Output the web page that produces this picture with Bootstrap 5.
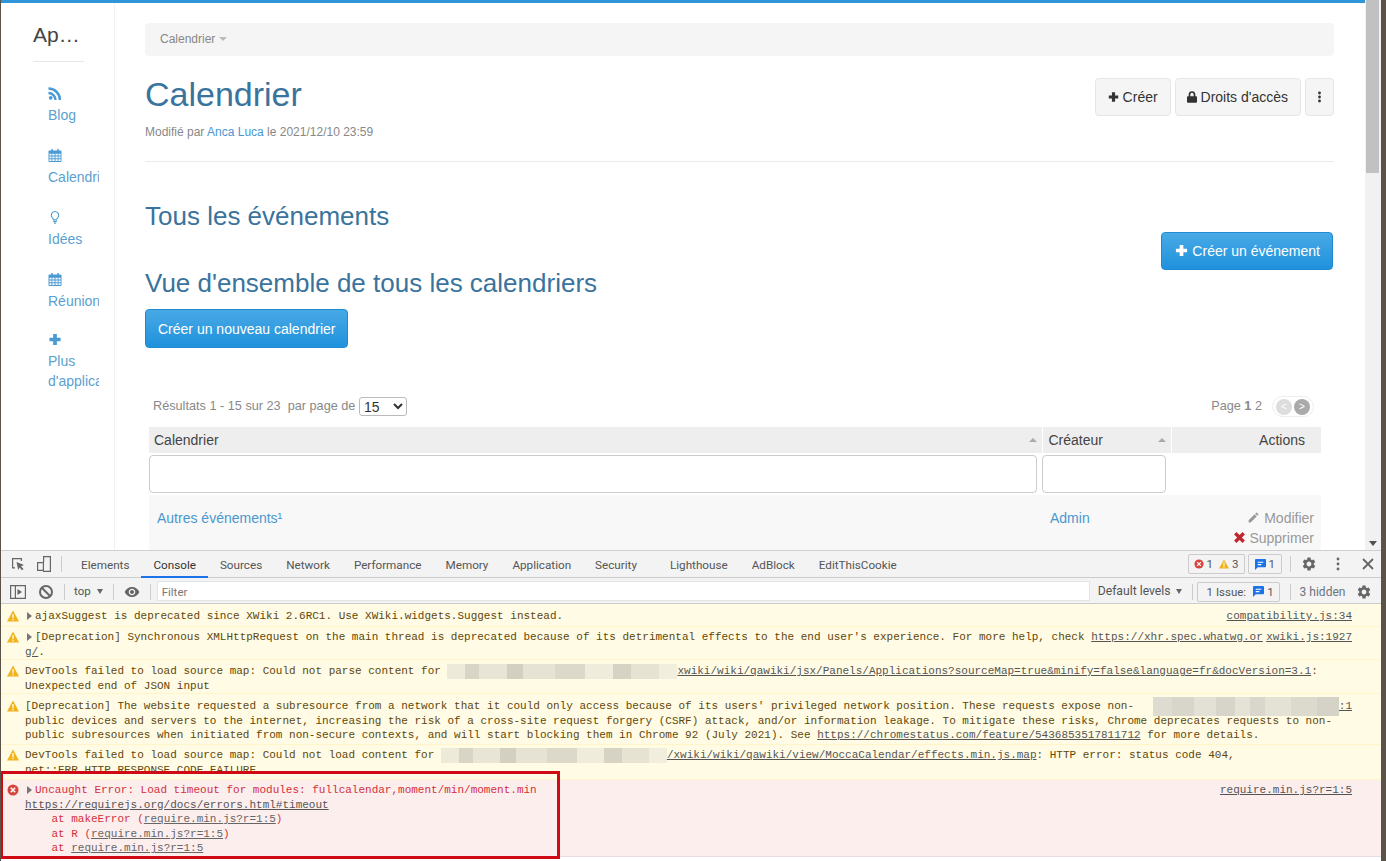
<!DOCTYPE html>
<html lang="fr">
<head>
<meta charset="utf-8">
<title>Calendrier</title>
<link href="https://cdn.jsdelivr.net/npm/bootstrap@5.3.0/dist/css/bootstrap.min.css" rel="stylesheet">
<style>
html,body{height:861px;overflow:hidden;margin:0}
body{font-family:"Liberation Sans",Arial,sans-serif;font-size:14px;background:#5b5248;color:#333}
.shell{height:861px;width:1380px;margin-left:1px;background:#fff;position:relative;overflow:hidden}
.page-pane{height:550px;overflow:hidden}
.page-main{width:1364px;border-top:3px solid #2f95d9;overflow:hidden}
.apps{width:114px;flex:none;border-right:1px solid #f1f1f1;padding:0 0 0 32px}
.apps-title{font-size:21px;color:#444;line-height:24px;margin-top:20px;padding-bottom:14px;border-bottom:1px solid #e6e6e6;width:51px;margin-bottom:22px}
.app-link{display:block;width:51px;margin-left:15px;height:62px;overflow:hidden;color:#5c9fd0;white-space:nowrap;line-height:20px;text-decoration:none}
.app-link:last-child{margin-top:-2px;height:70px}
.app-link svg{display:block;height:13px;width:14px;margin:3px 0 5px;fill:#4a9ad4}
.app-link span{display:block}
.content{width:1189px;margin-left:30px;flex:none}
.crumb{height:33px;margin-top:20px;background:#f5f5f5;border-radius:4px;padding-left:15px;font-size:12px;color:#888;line-height:33px}
.crumb i{display:inline-block;border:4px solid transparent;border-top-color:#bbb;border-bottom:0;vertical-align:2px}
.doc-title{font-size:34px;line-height:40px;color:#3a739c;margin:18px 0 0;font-weight:400}
.doc-meta{font-size:12px;line-height:17px;color:#888;margin-top:10px}
.doc-meta a,.cell-link{color:#4a97cf;text-decoration:none}
.btn-soft{background:#f5f5f5;border:1px solid #e6e6e6;color:#333;font-size:14px;height:38px;line-height:20px;padding:8px 12px;border-radius:4px}
.btn-soft svg{width:11px;height:12px;fill:#333;vertical-align:-1px}
.btn-soft.btn-dots{padding:8px 0;width:29px}
.btn-lock svg{width:10px}
.btn-lock{padding:8px 12px 8px 11px}
.btn-sky{background:linear-gradient(#48a9e6,#1f92dc);border:1px solid #2089cf;color:#fff;font-size:14px;border-radius:4px;padding:8px 12px;line-height:20px}
.btn-sky svg{width:13px;height:13px;fill:#fff;vertical-align:-1px}
.btn-event{padding-left:13px}
.head-tools{margin-top:22px;height:38px}
.divider{border-top:1px solid #eaeaea;margin-top:20px}
.sect{font-size:26px;font-weight:400;line-height:26px;color:#3a739c;margin:0}
.sect-1{margin-top:41px}
.row-create{margin:3px 1px 0 0;height:38px}
.btn-cal{margin-top:13px;height:39px}
.results{margin-top:49px;padding:0 20px 0 8px;height:19px;font-size:12.7px;color:#888;line-height:19px}
.results select{width:48px;height:19px;font-size:14px;line-height:17px;padding:0;border:1px solid #bbb;border-radius:3px;color:#333;background:#fff;font-family:inherit;vertical-align:top}
.pager-dots{border:1px solid #eee;border-radius:11px;height:21px;width:42px;margin-left:10px;margin-top:-1px;gap:1px;padding-left:2px}
.pager-dot{width:16px;height:16px;border-radius:50%;color:#fff;font-size:10px;line-height:16px;text-align:center;margin-left:1px}
.pg-off{background:#ddd}.pg-on{background:#aaa}
.grid-wrap{margin:11px 0 0 4px;width:1172px}
.grid-tbl{width:1172px;table-layout:fixed}
.col-a{width:893px}.col-b{width:129px}.col-c{width:150px}
.grid-tbl th{background:#eee;font-weight:400;height:26px;padding:0 5px 0 6px;border-left:1px solid #fff;color:#444;position:relative}
.grid-tbl th:first-child{border-left:0;padding-left:5px}
.grid-tbl th.th-act{padding-right:16px}
.grid-tbl th i{position:absolute;right:5px;top:11px;border:4px solid transparent;border-bottom-color:#aaa;border-top:0}
.filter-cell{height:42px;padding:0 5px 0 0;vertical-align:middle}
.filter-box{display:block;height:38px;border:1px solid #ccc;border-radius:4px;background:#fff}
.grid-tbl td.body-cell{background:#f8f8f8;vertical-align:top;padding:13px 7px 0 8px;line-height:20px;height:70px}
.act{color:#999;text-align:right}
.act svg{width:13px;height:13px;vertical-align:-1px}
.devtools{height:311px;border-top:1px solid #cfcfcf;font-family:Roboto,"Noto Sans",sans-serif;font-size:11.5px;color:#555}
.tb1{height:27px;background:#f3f3f3;border-bottom:1px solid #ccc}
.tb2{height:26px;background:#f3f3f3;border-bottom:1px solid #ccc;padding-top:2px}
.dt-ico{fill:#666;flex:none}
.dt-sep{width:1px;height:16px;background:#ccc;flex:none}
.dt-tab{padding:0 12px;height:27px;line-height:28px;color:#555;font-size:11.7px}
.dt-tab-on{color:#333;border-bottom:2px solid #1a73e8}
.tab-gap{margin-left:9px}
.filter-input{width:933px;height:20px;background:#fff;border:1px solid #e4e4e4;color:#777;line-height:20px;padding-left:4px;margin:-2px 0 0 6px}
.count-box{border:1px solid #ccc;border-radius:2px;height:20px;line-height:18px;padding:0 5px;background:#f3f3f3;gap:3px}
.count-b{padding:0 6px}
.warn-gap{margin-left:3px}
.levels{font-size:12.2px;margin-left:8px}
.tri{border:3px solid transparent;border-top:5px solid #666;border-bottom:0;display:inline-block}
.log{font-family:"Liberation Mono","DejaVu Sans Mono",monospace;font-size:11px;line-height:14.6px;position:relative}
.msg{display:flex;position:relative;overflow:hidden}
.msg-ic{width:24px;flex:none;padding:0 0 0 6px}
.msg-ic svg{width:12px;height:12px;display:block;margin-top:1px}
.msg-body{flex:none;width:1327px;white-space:pre}
.msg-warn{background:#fffbe5;border-bottom:1px solid #fff5c9;color:#5f4708}
.msg-err{background:#fdeeee;border-bottom:1px solid #e8dcdc;color:#d3303a}
.msg a{color:#555;text-decoration:underline}
.msg-err .stack a{color:#666}
.h-23{height:23px;padding-top:5px}
.h-33{height:33px;padding-top:3px}
.h-34{height:34px;padding-top:4px}
.h-51{height:51px;padding-top:5px}
.h-35{height:35px;padding-top:3px}
.h-77{height:77px;padding-top:3px}
.expand{display:inline-block;width:10px;height:9px;vertical-align:-1px}
.expand::before{content:"";display:block;margin:1px 0 0 2px;border:4px solid transparent;border-left:5px solid #777;border-right:0}
.mosaic{display:inline-block;height:15px;vertical-align:top;background:linear-gradient(90deg,#eeeada 0 8%,#d8d5c6 8% 14%,#e8e5d6 14% 26%,#d3d0c2 26% 33%,#e6e3d4 33% 47%,#dcd9ca 47% 60%,#efecdc 60% 72%,#d6d3c4 72% 80%,#e6e3d3 80% 92%,#f1eedd 92%)}
.w-234{width:230px}.w-231{width:226px}
.mosaic-over{position:absolute;left:1152px;top:3px;width:186px;height:19px;background:linear-gradient(90deg,#dedcd0 0 10%,#d8d6ca 10% 22%,#e3e1d5 22% 34%,#d7d5c9 34% 44%,#e5e3d6 44% 52%,#d9d7cb 52% 60%,#e4e2d5 60% 74%,#dcdacd 74% 88%,#d5d3c8 88%)}
.prompt-row{height:5px;background:#fff}
.mark-box{position:absolute;left:-1px;top:771px;width:560px;height:88px;border:3px solid #d00a14;pointer-events:none}
.sb{width:16px;flex:none;background:#f1f1f1;position:relative}
.sb-thumb{width:13px;height:173px;background:#c1c1c1;margin-left:1px}
.sb-down{position:absolute;left:4px;bottom:4px;border:4px solid transparent;border-top:5px solid #505050;border-bottom:0}
.ins-ico{margin:0 10px 0 9px}
.dev-ico{margin-right:9px}
.sep-1{margin-right:7px}
.gear-1{margin-left:10px}
.dots-1{margin-left:19px}
.x-1{margin:0 7px 0 22px}
.cnt-1{margin-left:3px}
.tog-ico{margin:0 9px 0 9px}
.sep-2{margin:0 9px 0 11px}
.tri-top{margin-left:6px}
.sep-3{margin-left:10px}
.eye-1{margin-left:10px}
.tri-lv{margin-left:5px}
.hid-1{margin-left:9px;font-size:12px}
.gear-2{margin-left:11px}
</style>
</head>
<body>
<svg width="0" height="0" class="position-absolute">
<symbol id="i-rss" viewBox="0 0 14 14"><circle cx="2.4" cy="11.6" r="2"/><path d="M0 5.2v2.6a6.2 6.2 0 0 1 6.2 6.2h2.6A8.8 8.8 0 0 0 0 5.2z"/><path d="M0 .4V3a11 11 0 0 1 11 11h2.7A13.6 13.6 0 0 0 0 .4z"/></symbol>
<symbol id="i-cal" viewBox="0 0 14 14"><path fill-rule="evenodd" d="M3 0h1.6v1.6h4.8V0H11v1.600h2a1 1 0 0 1 1 1V13a1 1 0 0 1-1 1H1a1 1 0 0 1-1-1V2.600a1 1 0 0 1 1-1h2zM1 5v2h2.200V5zm3.100 0v2h2.400V5zm3.400 0v2h2.400V5zm3.300 0v2H13V5zM1 8v2h2.200V8zm3.100 0v2h2.400V8zm3.400 0v2h2.400V8zm3.300 0v2H13V8zM1 11v2h2.200v-2zm3.100 0v2h2.400v-2zm3.400 0v2h2.400v-2zm3.300 0v2H13v-2z"/></symbol>
<symbol id="i-bulb" viewBox="0 0 14 14"><path fill-rule="evenodd" d="M7 0a4.600 4.600 0 0 1 3.300 7.800C9.400 8.800 9.200 9.300 9.100 10H4.900C4.800 9.300 4.600 8.800 3.700 7.800A4.600 4.600 0 0 1 7 0zm0 1.100a3.500 3.500 0 0 0-2.500 5.900c.8.900 1.100 1.500 1.300 2h2.400c.2-.5.500-1.100 1.300-2A3.500 3.500 0 0 0 7 1.100z"/><path d="M5 10.600h4v1.200H5zM5.500 12.300h3l-.7 1.400H6.200z"/></symbol>
<symbol id="i-plus" viewBox="0 0 14 14"><path d="M5 1h4v4h4v4H9v4H5V9H1V5h4z"/></symbol>
<symbol id="i-lock" viewBox="0 0 12 14"><path fill-rule="evenodd" d="M6 0a4 4 0 0 1 4 4v2h1a1 1 0 0 1 1 1v6a1 1 0 0 1-1 1H1a1 1 0 0 1-1-1V7a1 1 0 0 1 1-1h1V4a4 4 0 0 1 4-4zm0 2a2 2 0 0 0-2 2v2h4V4a2 2 0 0 0-2-2z"/></symbol>
<symbol id="i-gear" viewBox="0 0 24 24"><path d="M19.14 12.94c.04-.3.06-.61.06-.94 0-.32-.02-.64-.07-.94l2.03-1.58c.18-.14.23-.41.12-.61l-1.92-3.32c-.12-.22-.37-.29-.59-.22l-2.39.96c-.5-.38-1.03-.7-1.62-.94l-.36-2.54c-.04-.24-.24-.41-.48-.41h-3.84c-.24 0-.43.17-.47.41l-.36 2.54c-.59.24-1.13.57-1.62.94l-2.39-.96c-.22-.08-.47 0-.59.22L2.74 8.870c-.12.21-.08.47.12.61l2.03 1.58c-.05.3-.09.63-.09.94s.02.64.07.94l-2.03 1.58c-.18.14-.23.41-.12.61l1.92 3.32c.12.22.37.29.59.22l2.39-.96c.5.38 1.03.7 1.62.94l.36 2.54c.05.24.24.41.48.41h3.84c.24 0 .44-.17.47-.41l.36-2.54c.59-.24 1.13-.56 1.62-.94l2.39.96c.22.08.47 0 .59-.22l1.92-3.32c.12-.22.07-.47-.12-.61l-2.01-1.58zM12 15.600c-1.980 0-3.600-1.620-3.600-3.600s1.620-3.600 3.600-3.600 3.600 1.620 3.600 3.600-1.620 3.600-3.600 3.600z"/></symbol>
<symbol id="i-warn" viewBox="0 0 12 12"><path fill="#f2b21a" d="M6 .5l6 11H0z"/><path fill="#fff8dc" d="M5.300 4h1.400v4H5.300zM5.300 8.800h1.400v1.400H5.300z"/></symbol>
<symbol id="i-err" viewBox="0 0 12 12"><circle cx="6" cy="6" r="5.500" fill="#d6453d"/><path stroke="#fff" stroke-width="1.500" d="M3.800 3.800l4.400 4.400M8.200 3.800l-4.400 4.400"/></symbol>
<symbol id="i-msg" viewBox="0 0 12 12"><path fill="#1a73e8" d="M1 0h10a1 1 0 0 1 1 1v7a1 1 0 0 1-1 1H3l-3 3V1a1 1 0 0 1 1-1z"/><path fill="#fff" d="M3 3h6v1.200H3zM3 5.500h4v1.200H3z"/></symbol>
</svg>

<div class="shell">
  <div class="page-pane d-flex">
    <div class="page-main d-flex">
      <nav class="apps">
        <div class="apps-title">Ap…</div>
        <a class="app-link" href="#"><svg><use href="#i-rss"/></svg><span>Blog</span></a>
        <a class="app-link" href="#"><svg><use href="#i-cal"/></svg><span>Calendrier</span></a>
        <a class="app-link" href="#"><svg><use href="#i-bulb"/></svg><span>Idées</span></a>
        <a class="app-link" href="#"><svg><use href="#i-cal"/></svg><span>Réunions</span></a>
        <a class="app-link" href="#"><svg><use href="#i-plus"/></svg><span>Plus</span><span>d'applications</span></a>
      </nav>
      <main class="content">
        <div class="crumb">Calendrier <i></i></div>
        <div class="d-flex justify-content-between">
          <div>
            <h1 class="doc-title">Calendrier</h1>
            <div class="doc-meta">Modifié par <a href="#">Anca Luca</a> le 2021/12/10 23:59</div>
          </div>
          <div class="d-flex head-tools gap-1">
            <button class="btn btn-soft"><svg><use href="#i-plus"/></svg> Créer</button>
            <button class="btn btn-soft btn-lock"><svg><use href="#i-lock"/></svg> Droits d'accès</button>
            <button class="btn btn-soft btn-dots"><svg viewBox="0 0 4 12"><circle cx="2" cy="2" r="1.400"/><circle cx="2" cy="6" r="1.400"/><circle cx="2" cy="10" r="1.400"/></svg></button>
          </div>
        </div>
        <div class="divider"></div>
        <h2 class="sect sect-1">Tous les événements</h2>
        <div class="d-flex justify-content-end row-create">
          <button class="btn btn-sky btn-event"><svg><use href="#i-plus"/></svg> Créer un événement</button>
        </div>
        <h2 class="sect">Vue d'ensemble de tous les calendriers</h2>
        <button class="btn btn-sky btn-cal">Créer un nouveau calendrier</button>
        <div class="d-flex justify-content-between results">
          <div>Résultats 1 - 15 sur 23 &nbsp;par page de <select aria-label="par page"><option>15</option></select></div>
          <div class="d-flex">Page&nbsp;<b>1</b>&nbsp;2
            <div class="d-flex align-items-center pager-dots"><span class="pager-dot pg-off">&lt;</span><span class="pager-dot pg-on">&gt;</span></div>
          </div>
        </div>
        <div class="grid-wrap">
          <table class="grid-tbl">
            <colgroup><col class="col-a"><col class="col-b"><col class="col-c"></colgroup>
            <tr><th>Calendrier<i></i></th><th>Créateur<i></i></th><th class="text-end th-act">Actions</th></tr>
            <tr><td class="filter-cell"><span class="filter-box"></span></td><td class="filter-cell"><span class="filter-box"></span></td><td></td></tr>
            <tr>
              <td class="body-cell"><a class="cell-link" href="#">Autres événements¹</a></td>
              <td class="body-cell"><a class="cell-link" href="#">Admin</a></td>
              <td class="body-cell act">
                <div><svg viewBox="0 0 24 24" fill="#999"><path d="M3 17.250V21h3.750L17.810 9.940l-3.750-3.750L3 17.250zM20.710 7.040a1 1 0 0 0 0-1.410l-2.340-2.340a1 1 0 0 0-1.410 0l-1.830 1.830 3.750 3.750 1.830-1.830z"/></svg> Modifier</div>
                <div><svg viewBox="0 0 12 12" fill="#c0282d"><path d="M3.200 1L6 3.800 8.800 1 11 3.200 8.200 6 11 8.800 8.800 11 6 8.200 3.200 11 1 8.800 3.800 6 1 3.200z"/></svg> Supprimer</div>
              </td>
            </tr>
          </table>
        </div>
      </main>
    </div>
    <div class="sb"><div class="sb-thumb"></div><div class="sb-down"></div></div>
  </div>

  <section class="devtools">
    <div class="tb1 d-flex align-items-center">
      <svg class="dt-ico ins-ico" width="16" height="16" viewBox="0 0 16 16"><path d="M2 2h10v3h-1.200V3.200H3.200v8H5v1.200H2z"/><path d="M6.500 6l7.500 3-3 1.200L13.500 13 12 14.300 9.700 11.500 8.200 14z"/></svg>
      <svg class="dt-ico dev-ico" width="16" height="17" viewBox="0 0 16 17"><path fill-rule="evenodd" d="M7 0h8v16H7V15H1V6h6zM8.200 1.200V6H8v8.800h5.800V1.200zM2.200 7.200v6.600h4.600V7.200z"/></svg>
      <div class="dt-sep sep-1"></div>
      <div class="d-flex">
        <div class="dt-tab">Elements</div><div class="dt-tab dt-tab-on">Console</div><div class="dt-tab">Sources</div><div class="dt-tab">Network</div><div class="dt-tab">Performance</div><div class="dt-tab">Memory</div><div class="dt-tab">Application</div><div class="dt-tab">Security</div><div class="dt-tab tab-gap">Lighthouse</div><div class="dt-tab">AdBlock</div><div class="dt-tab">EditThisCookie</div>
      </div>
      <div class="d-flex align-items-center ms-auto">
        <div class="count-box d-flex align-items-center"><svg width="10" height="10"><use href="#i-err"/></svg>1 <svg width="10" height="10" class="warn-gap"><use href="#i-warn"/></svg>3</div>
        <div class="count-box count-b d-flex align-items-center cnt-1"><svg width="11" height="11"><use href="#i-msg"/></svg>1</div>
        <div class="dt-sep ms-2"></div>
        <svg class="dt-ico gear-1" width="16" height="16"><use href="#i-gear"/></svg>
        <svg class="dt-ico dots-1" width="4" height="14" viewBox="0 0 4 14"><circle cx="2" cy="2" r="1.400"/><circle cx="2" cy="7" r="1.400"/><circle cx="2" cy="12" r="1.400"/></svg>
        <svg class="dt-ico x-1" width="12" height="12" viewBox="0 0 12 12"><path stroke="#666" stroke-width="1.800" d="M1 1l10 10M11 1L1 11"/></svg>
      </div>
    </div>
    <div class="tb2 d-flex align-items-center">
      <svg class="dt-ico tog-ico" width="16" height="14" viewBox="0 0 16 14"><path fill-rule="evenodd" d="M0 0h16v14H0zM1.200 1.200v11.600h3.600V1.200zm4.800 0v11.600h8.800V1.200z"/><path d="M7.500 4l4.500 3-4.500 3z"/></svg>
      <svg class="ms-1" width="14" height="14" viewBox="0 0 14 14" fill="none" stroke="#666" stroke-width="2"><circle cx="7" cy="7" r="6"/><path d="M3 3l8 8"/></svg>
      <div class="dt-sep sep-2"></div>
      <span>top</span><span class="tri tri-top"></span>
      <div class="dt-sep sep-3"></div>
      <svg class="dt-ico eye-1" width="16" height="16" viewBox="0 0 24 24"><path d="M12 4.500C7 4.500 2.730 7.610 1 12c1.730 4.390 6 7.500 11 7.500s9.270-3.110 11-7.500c-1.730-4.390-6-7.500-11-7.500zM12 17c-2.760 0-5-2.240-5-5s2.240-5 5-5 5 2.240 5 5-2.240 5-5 5zm0-8c-1.660 0-3 1.340-3 3s1.340 3 3 3 3-1.340 3-3-1.340-3-3-3z"/></svg>
      <div class="dt-sep sep-3"></div>
      <div class="filter-input">Filter</div>
      <span class="levels">Default levels</span><span class="tri tri-lv"></span>
      <div class="dt-sep sep-3"></div>
      <div class="count-box d-flex align-items-center ms-1"><span class="px-1">1 Issue:</span><svg width="11" height="11"><use href="#i-msg"/></svg>1</div>
      <div class="dt-sep sep-3"></div>
      <span class="text-secondary hid-1">3 hidden</span>
      <svg class="dt-ico gear-2" width="16" height="16"><use href="#i-gear"/></svg>
    </div>
    <div class="log">
      <div class="msg msg-warn h-23"><div class="msg-ic"><svg><use href="#i-warn"/></svg></div><div class="msg-body"><div class="d-flex justify-content-between"><span><i class="expand"></i>ajaxSuggest is deprecated since XWiki 2.6RC1. Use XWiki.widgets.Suggest instead.</span><a href="#">compatibility.js:34</a></div></div></div>
      <div class="msg msg-warn h-33"><div class="msg-ic"><svg><use href="#i-warn"/></svg></div><div class="msg-body"><div class="d-flex justify-content-between"><span><i class="expand"></i>[Deprecation] Synchronous XMLHttpRequest on the main thread is deprecated because of its detrimental effects to the end user's experience. For more help, check <a href="#">https://xhr.spec.whatwg.or</a></span><a href="#">xwiki.js:1927</a></div><div><a href="#">g/</a>.</div></div></div>
      <div class="msg msg-warn h-34"><div class="msg-ic"><svg><use href="#i-warn"/></svg></div><div class="msg-body"><div>DevTools failed to load source map: Could not parse content for <span class="mosaic w-234"></span><a href="#">xwiki/wiki/qawiki/jsx/Panels/Applications?sourceMap=true&amp;minify=false&amp;language=fr&amp;docVersion=3.1</a>:</div><div>Unexpected end of JSON input</div></div></div>
      <div class="msg msg-warn h-51"><div class="msg-ic"><svg><use href="#i-warn"/></svg></div><div class="msg-body"><div class="d-flex justify-content-between"><span>[Deprecation] The website requested a subresource from a network that it could only access because of its users' privileged network position. These requests expose non-</span><a href="#">:1</a></div><div>public devices and servers to the internet, increasing the risk of a cross-site request forgery (CSRF) attack, and/or information leakage. To mitigate these risks, Chrome deprecates requests to non-</div><div>public subresources when initiated from non-secure contexts, and will start blocking them in Chrome 92 (July 2021). See <a href="#">https://chromestatus.com/feature/5436853517811712</a> for more details.</div></div><div class="mosaic-over"></div></div>
      <div class="msg msg-warn h-35"><div class="msg-ic"><svg><use href="#i-warn"/></svg></div><div class="msg-body"><div>DevTools failed to load source map: Could not load content for <span class="mosaic w-231"></span><a href="#">/xwiki/wiki/qawiki/view/MoccaCalendar/effects.min.js.map</a>: HTTP error: status code 404,</div><div>net::ERR_HTTP_RESPONSE_CODE_FAILURE</div></div></div>
      <div class="msg msg-err h-77"><div class="msg-ic"><svg><use href="#i-err"/></svg></div><div class="msg-body"><div class="d-flex justify-content-between"><span><i class="expand"></i>Uncaught Error: Load timeout for modules: fullcalendar,moment/min/moment.min</span><a href="#">require.min.js?r=1:5</a></div><div><a href="#">https://requirejs.org/docs/errors.html#timeout</a></div><div class="stack">    at makeError (<a href="#">require.min.js?r=1:5</a>)</div><div class="stack">    at R (<a href="#">require.min.js?r=1:5</a>)</div><div class="stack">    at <a href="#">require.min.js?r=1:5</a></div></div></div>
      <div class="prompt-row"></div>
    </div>
  </section>
  <div class="mark-box"></div>
</div>
<script src="https://cdn.jsdelivr.net/npm/bootstrap@5.3.0/dist/js/bootstrap.bundle.min.js"></script>
</body>
</html>
